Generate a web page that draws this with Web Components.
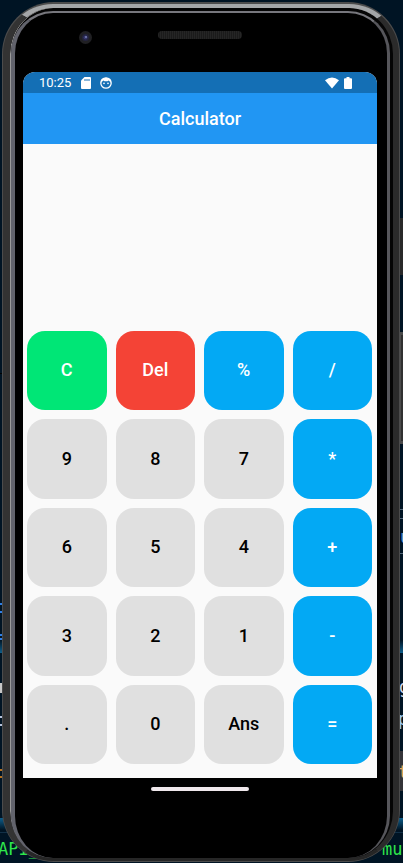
<!DOCTYPE html>
<html lang="en">
<head>
<meta charset="utf-8">
<meta name="viewport" content="width=device-width, initial-scale=1">
<title>Calculator</title>
<style>
body { margin: 0; background: #001424; font-family: Roboto, "Liberation Sans", sans-serif; }
</style>
</head>
<body>
<emulator-desktop>
  <phone-frame>
    <calculator-app></calculator-app>
  </phone-frame>
</emulator-desktop>
<script>
const attach = (el, html) => { el.attachShadow({ mode: "open" }).innerHTML = html; };

class EmulatorDesktop extends HTMLElement {
  constructor() {
    super();
    attach(this, `
<style>
:host { display: grid; min-height: 100vh; position: relative; overflow: hidden; box-sizing: border-box; padding: 2px 3px 1px 2px; }
svg { position: absolute; inset: 0; width: 100%; height: 100%; }
text { font-family: "DejaVu Sans Mono", monospace; font-size: 17px; }
</style>
<svg aria-hidden="true">
  <defs><linearGradient id="glow" x2="0" y2="1"><stop offset="0" stop-color="#001424"/><stop offset="1" stop-color="#0e5f8c"/></linearGradient></defs>
  <rect y="373" width="3" height="1" fill="#000"/>
  <rect y="603" width="3" height="2" fill="#2f7fe8"/><rect y="611" width="3" height="2" fill="#2f7fe8"/>
  <rect y="634" width="3" height="2" fill="#2f7fe8"/><rect y="638" width="3" height="2" fill="#2f7fe8"/>
  <rect y="640" width="100%" height="13" fill="url(#glow)"/>
  <rect y="683" width="3" height="10" fill="#c8c8c8"/>
  <rect y="716" width="3" height="2" fill="#b8c4dd"/><rect y="724" width="3" height="2" fill="#b8c4dd"/>
  <rect y="769" width="3" height="2" fill="#b87320"/><rect y="776" width="3" height="2" fill="#b87320"/>
  <g transform="translate(0 1492) scale(1 -1)"><rect y="662" width="100%" height="12" fill="url(#glow)"/></g>
  <rect y="832" width="100%" height="1" fill="#123047"/>
  <svg x="100%" overflow="visible">
    <rect x="-4" y="218" width="4" height="57" fill="#292929"/>
    <rect x="-4" y="332" width="4" height="112" fill="#4a4a4a"/>
    <rect x="-2" y="335" width="2" height="106" fill="#303030"/>
    <rect x="-4" y="509" width="4" height="1" fill="#53677a"/><rect x="-4" y="518" width="4" height="1" fill="#53677a"/>
    <rect x="-4" y="553" width="4" height="1" fill="#53677a"/>
    <rect x="-4" y="751" width="4" height="40" fill="#343438"/>
    <text x="-3" y="543" fill="#5b9bd5">u</text>
    <text x="-4" y="693" fill="#d6d6e8">g</text>
    <text x="-5" y="725" fill="#9ac8f0">p</text>
    <text x="-5" y="778" fill="#e0a860">t</text>
    <text x="-21" y="855" fill="#2fe64b">mu</text>
  </svg>
  <text x="-2" y="855" fill="#2fe64b">API_</text>
</svg>
<slot></slot>`);
  }
}

class PhoneFrame extends HTMLElement {
  constructor() {
    super();
    attach(this, `
<style>
:host { display: grid; position: relative; }
div { box-sizing: border-box; }
.shell { display: grid; border-radius: 52px; padding: 2px 1px 1px 1px; background: #4c4c4c; }
.rim { display: grid; border: solid; border-width: 4px 6px 3px 7px; border-color: #a4a6a8 #2b2b2b #262626 #333; border-radius: 50px; background: #050505; box-shadow: inset 1px 0 #9a9a9a; padding: 3px 3px 0 1px; }
.gloss { display: grid; border: solid; border-width: 2px 3px 0 4px; border-color: #77777d #56565b #222 #62636c; border-radius: 42px; background: #000; }
.face { display: grid; grid-template-rows: 59px 1fr 80px; padding: 0 10px 0 8px; }
.top, .bottom { display: grid; grid-template-columns: 1fr auto 1fr; }
.top { align-items: start; padding-top: 18px; }
.camera { width: 13px; height: 13px; margin: 0 0 0 56px; }
.speaker { width: 84px; height: 8px; border-radius: 4px; background: repeating-linear-gradient(90deg, #252525 0 1px, #1b1b1b 1px 2px); }
.home { grid-column: 2; width: 98px; height: 4px; border-radius: 2px; background: #efe8ec; margin-top: 9px; }
</style>
<div class="shell"><div class="rim"><div class="gloss"><div class="face">
  <div class="top">
    <svg class="camera" viewBox="0 0 13 13" aria-hidden="true"><circle cx="6.500" cy="6.500" r="6.500" fill="#202023"/><circle cx="6.500" cy="6.500" r="3.500" fill="#24243f"/><circle cx="6.500" cy="6.500" r="2" fill="#36376c"/><circle cx="7" cy="6" r="1" fill="#7880b0"/></svg>
    <div class="speaker"></div>
  </div>
  <slot></slot>
  <div class="bottom"><div class="home"></div></div>
</div></div></div></div>`);
  }
}

class StatusBar extends HTMLElement {
  constructor() {
    super();
    attach(this, `
<style>
:host { display: flex; align-items: center; height: 21px; box-sizing: border-box; padding: 0 25px 0 16px; background: #146fb5; color: #fff; font-size: 13px; line-height: 21px; }
time { margin-right: 10px; }
.face { margin-left: 9px; }
.wifi { margin-left: auto; margin-right: 5px; }
</style>
<time>10:25</time>
<svg width="10" height="12" viewBox="0 0 10 12" aria-hidden="true"><path d="M3.500 0H9a1 1 0 0 1 1 1v10a1 1 0 0 1-1 1H1a1 1 0 0 1-1-1V3.500z" fill="#fff"/><path d="M4 2v2M6 2v2M8 2v2" stroke="#146fb5"/></svg>
<svg class="face" width="12" height="12" viewBox="0 0 12 12" aria-hidden="true"><circle cx="6" cy="6" r="5.200" fill="none" stroke="#fff" stroke-width="1.300"/><path d="M1 6L1.500 2.500Q6-1 10.500 2.500L11 6L9.500 4.300L8.500 3.400L7.500 4.200H4.500L3.500 3.400L2.500 4.300z" fill="#fff"/><circle cx="4" cy="6.400" r=".8" fill="#fff"/><circle cx="8" cy="6.400" r=".8" fill="#fff"/></svg>
<svg class="wifi" width="14" height="12" viewBox="0 0 14 12" aria-hidden="true"><path d="M0 3.300Q7-2.300 14 3.300L7 11.500z" fill="#fff"/></svg>
<svg width="8" height="12" viewBox="0 0 8 12" aria-hidden="true"><path d="M2.500 0h3v1.300H7a1 1 0 0 1 1 1V11a1 1 0 0 1-1 1H1a1 1 0 0 1-1-1V2.300a1 1 0 0 1 1-1h1.500z" fill="#fff"/></svg>`);
  }
}

class AppBar extends HTMLElement {
  constructor() {
    super();
    attach(this, `
<style>
:host { display: block; background: #2196f3; color: #fff; }
h1 { margin: 0; padding-top: 1px; text-align: center; font-size: 18px; font-weight: 500; line-height: 50px; }
</style>
<h1><slot></slot></h1>`);
  }
}

class CalcKey extends HTMLElement {
  constructor() {
    super();
    attach(this, `
<style>
:host { display: grid; aspect-ratio: 1; }
button { border: 0; padding: 0; border-radius: 18px; font: 500 18px/20px Roboto, "Liberation Sans", sans-serif; background: #e0e0e0; color: #000; cursor: pointer; }
:host([tone]) button { color: #fff; }
:host([tone="op"]) button { background: #03a9f4; }
:host([tone="clear"]) button { background: #00e676; }
:host([tone="delete"]) button { background: #f44336; }
</style>
<button type="button"><slot></slot></button>`);
  }
}

class CalculatorApp extends HTMLElement {
  constructor() {
    super();
    const keys = [["C", "clear"], ["Del", "delete"], ["%", "op"], ["/", "op"],
      ["9"], ["8"], ["7"], ["*", "op"], ["6"], ["5"], ["4"], ["+", "op"],
      ["3"], ["2"], ["1"], ["-", "op"], ["."], ["0"], ["Ans"], ["=", "op"]];
    attach(this, `
<style>
:host { display: grid; grid-template-rows: auto auto 1fr auto; background: #fafafa; border-radius: 12px 12px 0 0; overflow: hidden; }
.keys { display: grid; grid-template-columns: repeat(4, minmax(0, 1fr)); gap: 9px; padding: 0 5px 14px 4px; }
</style>
<status-bar></status-bar>
<app-bar>Calculator</app-bar>
<output aria-label="Result"></output>
<div class="keys">${keys.map(([k, t]) => `<calc-key${t ? ` tone="${t}"` : ""}>${k}</calc-key>`).join("")}</div>`);
  }
}

customElements.define("status-bar", StatusBar);
customElements.define("app-bar", AppBar);
customElements.define("calc-key", CalcKey);
customElements.define("calculator-app", CalculatorApp);
customElements.define("phone-frame", PhoneFrame);
customElements.define("emulator-desktop", EmulatorDesktop);
</script>
</body>
</html>
